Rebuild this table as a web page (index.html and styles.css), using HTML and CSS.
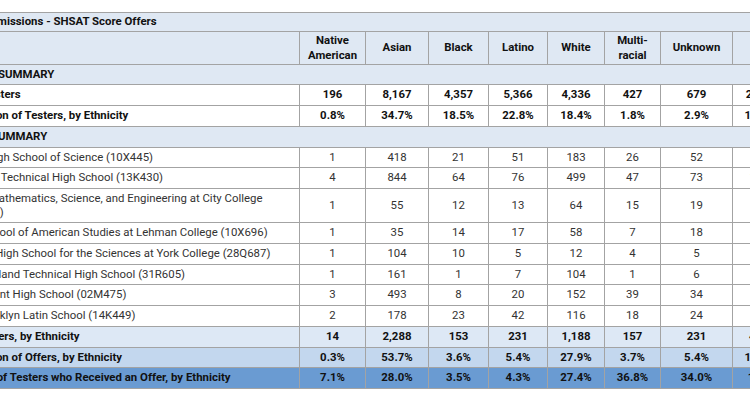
FILE: index.html
```html
<!DOCTYPE html>
<html>
<head>
<meta charset="utf-8">
<link rel="stylesheet" href="styles.css">
</head>
<body>
<div class="wrap">
<table class="shsat">
  <colgroup>
    <col class="c-label"><col class="c-na"><col class="c-asian"><col class="c-black"><col class="c-latino"><col class="c-white"><col class="c-multi"><col class="c-unknown"><col class="c-total">
  </colgroup>
  <tr class="title"><td colspan="9">2021 Admissions - SHSAT Score Offers</td></tr>
  <tr class="head">
    <th></th><th>Native<br>American</th><th>Asian</th><th>Black</th><th>Latino</th><th>White</th><th>Multi-<br>racial</th><th>Unknown</th><th>Total</th>
  </tr>
  <tr class="section"><td colspan="9">TESTER SUMMARY</td></tr>
  <tr class="bold"><td class="lbl">Total Testers</td><td>196</td><td>8,167</td><td>4,357</td><td>5,366</td><td>4,336</td><td>427</td><td>679</td><td>23,528</td></tr>
  <tr class="bold"><td class="lbl">Proportion of Testers, by Ethnicity</td><td>0.8%</td><td>34.7%</td><td>18.5%</td><td>22.8%</td><td>18.4%</td><td>1.8%</td><td>2.9%</td><td>100.0%</td></tr>
  <tr class="section"><td colspan="9">OFFER SUMMARY</td></tr>
  <tr><td class="lbl">Bronx High School of Science (10X445)</td><td>1</td><td>418</td><td>21</td><td>51</td><td>183</td><td>26</td><td>52</td><td>752</td></tr>
  <tr><td class="lbl">Brooklyn Technical High School (13K430)</td><td>4</td><td>844</td><td>64</td><td>76</td><td>499</td><td>47</td><td>73</td><td>1,607</td></tr>
  <tr><td class="lbl">HS for Mathematics, Science, and Engineering at City College (05M692)</td><td>1</td><td>55</td><td>12</td><td>13</td><td>64</td><td>15</td><td>19</td><td>179</td></tr>
  <tr><td class="lbl">High School of American Studies at Lehman College (10X696)</td><td>1</td><td>35</td><td>14</td><td>17</td><td>58</td><td>7</td><td>18</td><td>150</td></tr>
  <tr><td class="lbl">Queens High School for the Sciences at York College (28Q687)</td><td>1</td><td>104</td><td>10</td><td>5</td><td>12</td><td>4</td><td>5</td><td>141</td></tr>
  <tr><td class="lbl">Staten Island Technical High School (31R605)</td><td>1</td><td>161</td><td>1</td><td>7</td><td>104</td><td>1</td><td>6</td><td>281</td></tr>
  <tr><td class="lbl">Stuyvesant High School (02M475)</td><td>3</td><td>493</td><td>8</td><td>20</td><td>152</td><td>39</td><td>34</td><td>749</td></tr>
  <tr><td class="lbl">The Brooklyn Latin School (14K449)</td><td>2</td><td>178</td><td>23</td><td>42</td><td>116</td><td>18</td><td>24</td><td>403</td></tr>
  <tr class="bold t1"><td class="lbl">Total Offers, by Ethnicity</td><td>14</td><td>2,288</td><td>153</td><td>231</td><td>1,188</td><td>157</td><td>231</td><td>4,262</td></tr>
  <tr class="bold t2"><td class="lbl">Proportion of Offers, by Ethnicity</td><td>0.3%</td><td>53.7%</td><td>3.6%</td><td>5.4%</td><td>27.9%</td><td>3.7%</td><td>5.4%</td><td>100.0%</td></tr>
  <tr class="bold t3"><td class="lbl">Percent of Testers who Received an Offer, by Ethnicity</td><td>7.1%</td><td>28.0%</td><td>3.5%</td><td>4.3%</td><td>27.4%</td><td>36.8%</td><td>34.0%</td><td>18.1%</td></tr>
</table>
</div>
</body>
</html>
```
FILE: styles.css
```css
html, body {
  margin: 0;
  padding: 0;
  background: #ffffff;
  overflow: hidden;
}
.wrap {
  width: 750px;
  height: 410px;
  overflow: hidden;
  padding-top: 12px;
  box-sizing: border-box;
}
.shsat {
  margin-left: -51px;
  border-collapse: collapse;
  table-layout: fixed;
  width: 845px;
  font-family: Roboto, "Liberation Sans", Arial, sans-serif;
  font-size: 11.4px;
  color: #333;
}
.c-label { width: 350px; }
.c-na { width: 66px; }
.c-asian { width: 63px; }
.c-black { width: 60px; }
.c-latino { width: 59px; }
.c-white { width: 57px; }
.c-multi { width: 56px; }
.c-unknown { width: 72px; }
.c-total { width: 62px; }
.shsat td, .shsat th {
  border: 1px solid #a3a3a3;
  padding: 3px 4px;
  line-height: 13.7px;
  text-align: center;
}
.shsat .lbl { text-align: left; }
.title td {
  background: #dfe8f3;
  font-weight: bold;
  color: #111;
  text-align: left;
  padding: 2px 4px;
}
.head th {
  background: #dfe8f3;
  color: #111;
  font-weight: bold;
  line-height: 15px;
  padding: 1px 4px;
}
.section td {
  background: #dfe8f3;
  font-weight: bold;
  color: #111;
  text-align: left;
}
.bold td {
  font-weight: bold;
  color: #111;
}
.t1 td { background: #dde8f5; }
.t2 td { background: #c3d7ee; }
.t3 td { background: #6a9bd2; }
```
